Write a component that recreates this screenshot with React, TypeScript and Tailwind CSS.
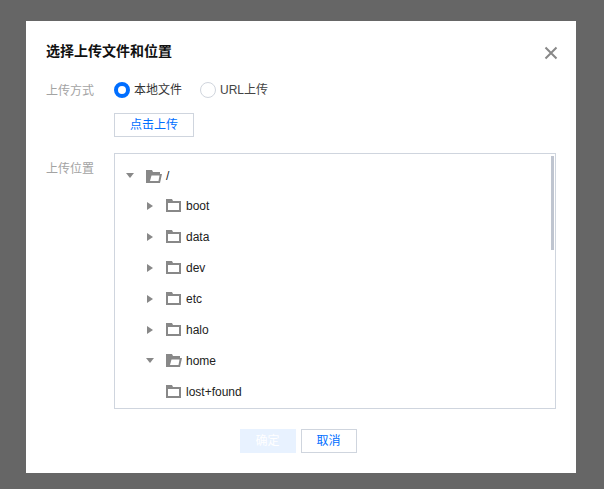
const font = "font-['Liberation_Sans','Noto_Sans_CJK_SC',sans-serif]"

function FolderClosed() {
  return (
    <svg width="15" height="14" viewBox="0 0 15 14" className="-mt-[2px] shrink-0">
      <path d="M0 1h6l1 2h8v11H0z" fill="#888888" />
      <path d="M2 5h11v7H2z" fill="#ffffff" />
    </svg>
  )
}

function FolderOpen() {
  return (
    <svg width="16" height="13" viewBox="0 0 16 13" className="shrink-0">
      <path d="M0 0h6l1 2h7v2h2l-2 9H0z" fill="#888888" />
      <path d="M5.500 5.500H13.500L12.500 11H4z" fill="#ffffff" />
    </svg>
  )
}

function Caret({ open }: { open?: boolean }) {
  if (open) {
    return (
      <svg width="10" height="6" viewBox="0 0 10 6" className="shrink-0">
        <path d="M1 0h8L5 5z" fill="#888888" />
      </svg>
    )
  }
  return (
    <svg width="6" height="10" viewBox="0 0 6 10" className="shrink-0">
      <path d="M0 1l6 4-6 4z" fill="#888888" />
    </svg>
  )
}

const rows = [
  { name: "boot", caret: true },
  { name: "data", caret: true },
  { name: "dev", caret: true },
  { name: "etc", caret: true },
  { name: "halo", caret: true },
  { name: "home", open: true },
  { name: "lost+found" },
]

export default function App() {
  return (
    <div className={`h-[489px] w-[604px] overflow-hidden bg-[#666666] pt-[21px] pl-[26px] ${font}`}>
      <div className="relative h-[452px] w-[550px] bg-white px-5 pt-[21px]">
        <button className="absolute top-[24px] right-[17px] h-4 w-4">
          <svg width="16" height="16" viewBox="0 0 16 16">
            <path d="M2.500 2.500l11 11M13.500 2.500l-11 11" stroke="#888888" strokeWidth="2" />
          </svg>
        </button>

        <h2 className="h-[18px] text-sm leading-[18px] font-bold text-[#111111]">选择上传文件和位置</h2>

        {/* upload method */}
        <div className="mt-[21px] flex h-[18px] items-center">
          <span className="w-[68px] pt-[2px] text-xs text-[#a3a3a3]">上传方式</span>
          <label className="flex items-center text-xs text-[#333333]">
            <span className="h-4 w-4 rounded-full border-[4px] border-[#006eff] bg-white" />
            <span className="ml-[4px]">本地文件</span>
          </label>
          <label className="ml-[18px] flex items-center text-xs text-[#444444]">
            <span className="h-4 w-4 rounded-full border border-[#d0d5dd] bg-white" />
            <span className="ml-[4px]">URL上传</span>
          </label>
        </div>

        <button className="mt-[14px] ml-[68px] block h-6 w-20 border border-[#cfd5de] bg-white text-xs text-[#006eff]">
          点击上传
        </button>

        {/* upload location */}
        <div className="mt-4 flex">
          <span className="mt-[8px] w-[68px] text-xs text-[#a3a3a3]">上传位置</span>
          <div className="relative h-[256px] w-[442px] overflow-hidden border border-[#cfd5de] pt-[6px]">
            <div className="absolute top-[2px] right-[1px] h-[94px] w-[3px] bg-[#bfc5d0]" />
            <div className="flex h-[30px] items-center pt-[2px] pl-[10px]">
              <Caret open />
              <span className="ml-[11px]"><FolderOpen /></span>
              <span className="ml-[4px] text-xs text-[#222222]">/</span>
            </div>
            {rows.map((row) => (
              <div key={row.name} className="flex h-[31px] items-center pl-[32px] first:h-[30px]">
                <span className="flex w-[19px] items-center">
                  {row.caret && <Caret />}
                  {row.open && <span className="-ml-[2px]"><Caret open /></span>}
                </span>
                {row.open ? <FolderOpen /> : <FolderClosed />}
                <span className={`text-xs text-[#222222] ${row.open ? "ml-[4px]" : "ml-[5px]"}`}>{row.name}</span>
              </div>
            ))}
          </div>
        </div>

        <div className="mt-5 flex justify-center gap-[5px] pr-[6px]">
          <button className="h-6 w-14 bg-[#e8f2ff] text-xs text-white">确定</button>
          <button className="h-6 w-14 border border-[#cfd5de] bg-white text-xs text-[#006eff]">取消</button>
        </div>
      </div>
    </div>
  )
}
